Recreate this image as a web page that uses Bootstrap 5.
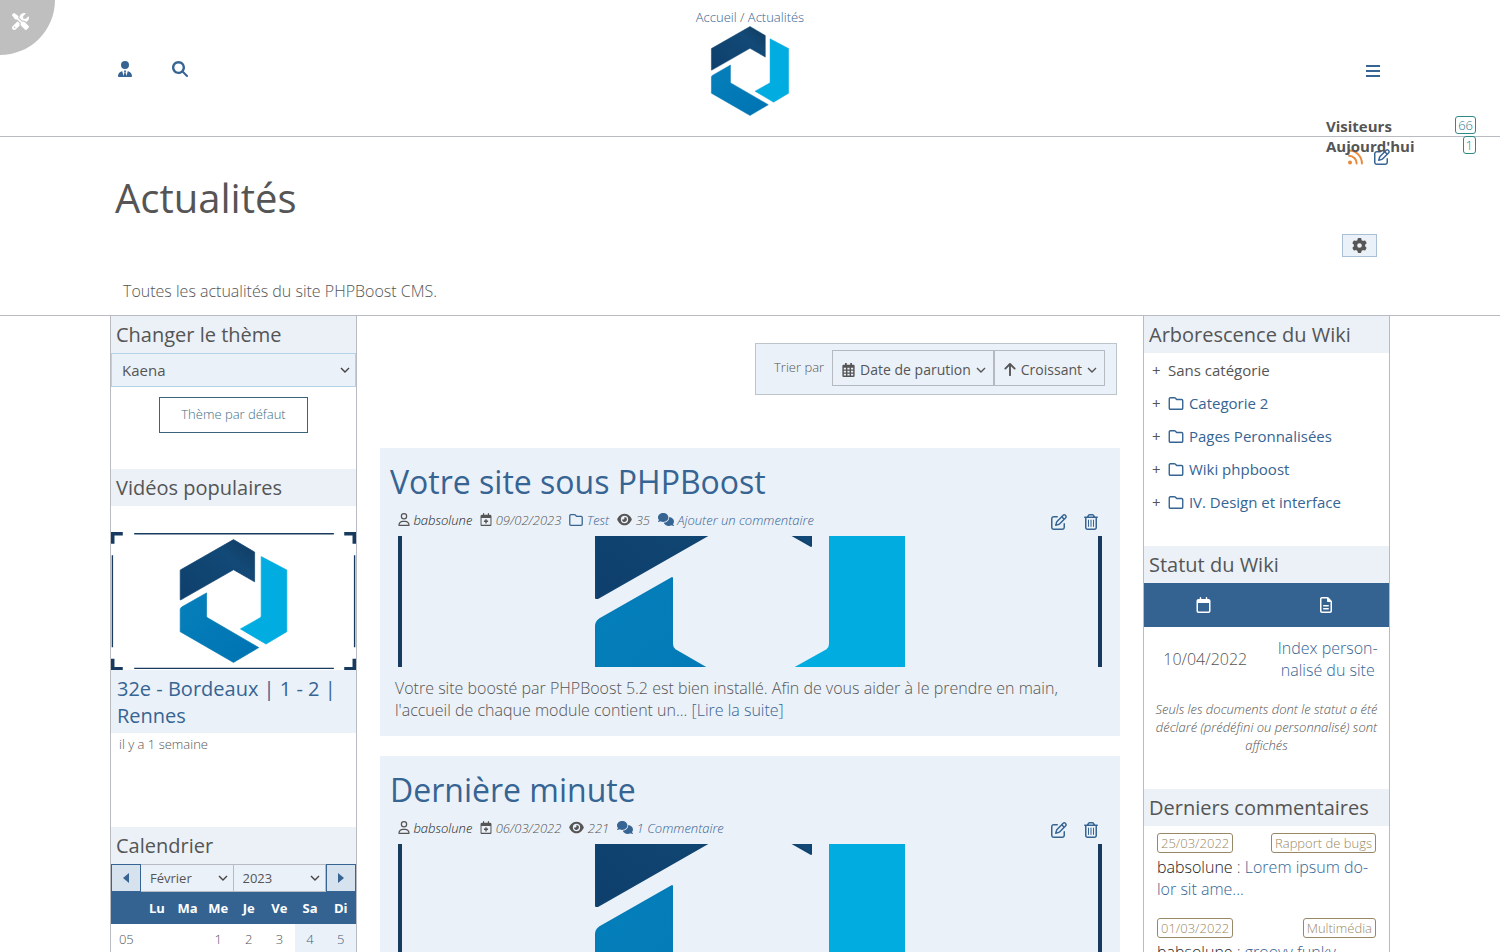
<!DOCTYPE html>
<html lang="fr">
<head>
<meta charset="utf-8">
<meta name="viewport" content="width=device-width, initial-scale=1">
<title>Actualités - PHPBoost</title>
<link href="https://cdn.jsdelivr.net/npm/bootstrap@5.3.0/dist/css/bootstrap.min.css" rel="stylesheet">
<style>
:root { --blue: #366493; --ink: #555555; --pale: #ebf1f8; --line: #b8bcc2; }
body { font-family: "Open Sans", sans-serif; font-weight: 300; font-size: 16px; line-height: 22px; color: var(--ink); background: #fff; }
a { color: var(--blue); text-decoration: none; }
.ico { fill: currentColor; display: inline-block; flex: none; }
.wrap { max-width: 1280px; }
.fs-s { font-size: 13px; }
.fs-m { font-size: 15px; font-weight: 400; }
.edge-b { border-bottom: 1px solid var(--line); }

/* header */
.top-bar { min-height: 137px; }
.crumbs { font-size: 13px; line-height: 18px; padding-top: 8px; }
.tools-corner { position: absolute; top: 0; left: 0; width: 55px; height: 55px; border: 0; padding: 0 14px 16px 0; background: #bfbfbf; color: #fff; border-radius: 0 0 55px 0; }
.top-links { position: absolute; top: 60px; left: 0; right: 0; }
.icon-btn { background: none; border: 0; padding: 0; color: var(--blue); line-height: 1; display: inline-flex; }
.icon-menu { margin: 5px 10px 0 auto; }
.visitors { position: absolute; top: 116px; right: 24px; width: 150px; z-index: 2; font-size: 15px; line-height: 20px; }
.visitors dt { font-weight: 700; }
.visitors > div { height: 20px; }
.pill { border: 1px solid #2f8a86; color: #2f7d8c; border-radius: 3px; font-size: 13px; line-height: 16px; padding: 0 2px; }
.pill-sand { border-color: #998866; color: #99885f; line-height: 18px; padding: 0 3px; }

/* page title */
.feed-links { gap: 11px; padding-top: 12px; }
.feed-rss { color: #e88a3c; }
.page-title { font-size: 40px; font-weight: 400; line-height: 50px; margin: 8px 0 0; padding-left: 5px; }
.gear-row { padding: 11px 13px 0 0; }
.gear-btn { width: 35px; height: 23px; background: var(--pale); border: 1px solid #a9bfd4; color: var(--ink); padding: 0; display: flex; align-items: center; justify-content: center; }
.intro { padding: 23px 13px 13px; }

/* side columns */
.side { flex: 0 0 247px; border: solid var(--line); border-width: 0 1px; min-width: 0; }
.side-title { font-size: 20px; font-weight: 400; line-height: 37px; background: #ebf1f6; padding: 0 5px; margin: 0; }
.side-form { margin-bottom: 36px; }
.kselect { appearance: none; border-radius: 0; color: var(--ink); border: 1px solid #b5d3e6; background: var(--pale) url("data:image/svg+xml,%3Csvg xmlns='http://www.w3.org/2000/svg' viewBox='0 0 10 6'%3E%3Cpath d='M1 1l4 4 4-4' fill='none' stroke='%23444' stroke-width='1.4'/%3E%3C/svg%3E") no-repeat right 5px center / 10px 6px; height: 34px; padding: 0 18px 0 10px; }
.btn-theme { display: block; margin: 10px auto 0; border: 1px solid #3c6478; border-radius: 0; background: #fff; color: #3c6e84; font-size: 13px; font-weight: 300; width: 149px; height: 36px; padding: 0; }
.video-item { padding: 26px 0 72px; }
.video-name { font-size: 20px; font-weight: 400; line-height: 27px; background: var(--pale); padding: 5px 6px 4px; }
.cal-nav .kselect { height: 28px; font-size: 13px; font-weight: 400; border-color: var(--line); border-width: 1px 1px 1px 0; padding-left: 9px; width: 50%; min-width: 0; }
.cal-btn { flex: 0 0 30px; border: 1px solid var(--blue); background: #d6e2ed; color: var(--blue); padding: 0; display: flex; align-items: center; justify-content: center; }
.cal { table-layout: fixed; width: 100%; text-align: center; font-size: 13px; }
.cal th { height: 32px; padding: 0; }
.cal td { height: 30px; padding: 0; }
.cal thead, .status thead { background: #346392; color: #fff; }
.cal .off { background: var(--pale); color: #41617f; }
.tree { padding: 5px 8px 23px; margin: 0; }
.tree li { line-height: 24px; padding-bottom: 9px; }
.tree .plus { width: 8px; margin-right: 8px; }
.tree .ico, .meta .ico { vertical-align: -1px; }
.tree .ico { margin-right: 1px; }
.status { table-layout: fixed; width: 100%; text-align: center; }
.status th { height: 44px; padding: 0 4px 4px 0; }
.status td { padding: 10px 8px; vertical-align: middle; }
.note { font-size: 13px; line-height: 18px; font-style: italic; padding: 9px 10px 35px; margin: 0; }
.who { color: #222; }
.who .ico { color: var(--ink); }
.comment-item { padding: 7px 13px 11px; }
.comment-item p { margin: 3px 0 0; }

/* news list */
.news-col { padding: 0 23px; min-width: 0; }
.sort-row { padding: 27px 3px 53px 0; }
.sorter { background: var(--pale); border: 1px solid #bcc4cc; padding: 6px 11px 8px 18px; }
.sort-label { font-size: 13px; padding: 6px 8px 0 0; }
.sort-btn { background: var(--pale); border: 1px solid #b4babf; color: var(--ink); font-size: 14px; line-height: 20px; height: 36px; padding: 3px 7px 0 9px; gap: 5px; }
.news { background: #ebf1f8; padding: 13px 10px 15px; margin-bottom: 20px; }
.news h2 { font-size: 32px; font-weight: 400; line-height: 42px; margin: 0; }
.meta-row { padding: 8px 12px 7px 8px; }
.meta { font-size: 13px; line-height: 18px; font-style: italic; gap: 8px; }
.acts { gap: 17px; padding-top: 3px; height: 18px; }
.cover { display: block; width: 100%; height: auto; }
.excerpt { padding: 10px 5px 0; margin: 0; }
</style>
</head>
<body>

<svg width="0" height="0" class="position-absolute" aria-hidden="true">
  <defs>
    <linearGradient id="gDark" x1="0" y1="1" x2="1" y2="0"><stop offset="0" stop-color="#0e3f6c"/><stop offset=".7" stop-color="#124976"/><stop offset="1" stop-color="#123a5f"/></linearGradient>
    <linearGradient id="gBlue" x1="0" y1="0" x2="1" y2="1"><stop offset="0" stop-color="#0580bb"/><stop offset="1" stop-color="#0073b2"/></linearGradient>
    <g id="hex" stroke-width="2" stroke-linejoin="round">
      <path fill="url(#gDark)" stroke="#114370" d="M200 110L354 22l61 36v86l-61-35L202 196h-2z"/>
      <path fill="url(#gBlue)" stroke="#057cb8" d="M200 224q0-4 4-7l72-41v66q0 4 3 6l148 86-73 43L200 288z"/>
      <path fill="#00ace0" stroke="#00ace0" d="M434 71l74 39v178l-60 36-74-44 57-32q3-2 3-6z"/>
    </g>
    <g id="framed">
      <use href="#hex"/>
      <path fill="#173a5e" d="M2 67h4v266H2zM702 67h4v266h-4zM67 3h577v4H67zM67 392h577v4H67zM0 0h34v10H10v24H0zM708 0h-34v10h24v24h10zM0 400h34v-10H10v-24H0zM708 400h-34v-10h24v-24h10z"/>
    </g>
    <symbol id="i-tools" viewBox="0 0 512 512"><path d="M78.600 5C69.100-2.400 55.600-1.500 47 7L7 47c-8.500 8.500-9.400 22-2.100 31.600l80 104c4.500 5.900 11.600 9.400 19 9.400h54.100l109 109c-14.700 29-10 65.400 14.300 89.600l112 112c12.500 12.500 32.800 12.500 45.300 0l64-64c12.500-12.500 12.500-32.800 0-45.300l-112-112c-24.200-24.200-60.600-29-89.600-14.300l-109-109V104c0-7.500-3.500-14.500-9.400-19L78.600 5zM19.900 396.100C7.200 408.800 0 426.100 0 444.100C0 481.600 30.400 512 67.900 512c18 0 35.300-7.200 48-19.900L233.700 374.300c-7.800-20.900-9-43.600-3.600-65.100l-61.700-61.700L19.900 396.100zM512 144c0-10.500-1.100-20.700-3.200-30.500c-2.400-11.200-16.100-14.100-24.200-6l-63.900 63.900c-3 3-7.100 4.700-11.300 4.700H352c-8.800 0-16-7.200-16-16V102.600c0-4.200 1.700-8.300 4.700-11.300l63.900-63.900c8.100-8.100 5.200-21.800-6-24.200C388.700 1.100 378.500 0 368 0C288.500 0 224 64.500 224 144l0 .8 85.300 85.300c36-9.100 75.800 .5 104 28.700L429 274.500c49-23 83-72.800 83-130.500zM56 432a24 24 0 1 1 48 0 24 24 0 1 1-48 0z"/></symbol>
    <symbol id="i-tie" viewBox="0 0 448 512"><path d="M96 128a128 128 0 1 0 256 0A128 128 0 1 0 96 128zm94.500 200.200l18.600 31L175.800 483.100l-36-146.900c-2-8.100-9.800-13.400-17.900-11.300C51.900 342.400 0 405.800 0 481.300c0 17 13.800 30.700 30.700 30.700H417.300c17 0 30.700-13.800 30.700-30.700c0-75.500-51.900-138.900-121.900-156.400c-8.100-2-15.900 3.300-17.900 11.300l-36 146.900L238.900 359.200l18.600-31c6.400-10.700-1.300-24.200-13.700-24.200H204.300c-12.400 0-20.100 13.600-13.700 24.200z"/></symbol>
    <symbol id="i-search" viewBox="0 0 512 512"><path d="M416 208c0 45.900-14.900 88.300-40 122.700L502.600 457.400c12.500 12.500 12.500 32.800 0 45.300s-32.800 12.500-45.300 0L330.700 376c-34.400 25.200-76.800 40-122.700 40C93.100 416 0 322.900 0 208S93.100 0 208 0S416 93.100 416 208zM208 340a132 132 0 1 0 0-264 132 132 0 1 0 0 264z"/></symbol>
    <symbol id="i-bars" viewBox="0 0 14 12"><path d="M0 0h14v2H0zM0 5h14v2H0zM0 10h14v2H0z"/></symbol>
    <symbol id="i-rss" viewBox="0 0 448 448"><circle cx="60" cy="388" r="60"/><path fill="none" stroke="currentColor" stroke-width="60" stroke-linecap="round" d="M32 190a226 226 0 0 1 226 226M32 32a384 384 0 0 1 384 384"/></symbol>
    <symbol id="i-edit" viewBox="0 0 512 512"><path d="M441 58.900L453.100 71c9.400 9.400 9.400 24.600 0 33.900L424 134.100 377.900 88 407 58.900c9.400-9.400 24.600-9.400 33.900 0zM209.800 256.200L344 121.900 390.100 168 255.800 302.200c-2.900 2.900-6.500 5-10.400 6.100l-58.500 16.700 16.700-58.500c1.100-3.900 3.200-7.500 6.100-10.400zM373.100 25L175.800 222.200c-8.700 8.700-15 19.400-18.300 31.100l-28.600 100c-2.400 8.400-.1 17.400 6.100 23.600s15.200 8.500 23.600 6.100l100-28.600c11.800-3.400 22.500-9.700 31.100-18.300L487 138.900c28.100-28.100 28.100-73.700 0-101.800L474.900 25C446.800-3.100 401.200-3.100 373.100 25zM88 64C39.400 64 0 103.400 0 152V424c0 48.600 39.400 88 88 88H360c48.600 0 88-39.400 88-88V312c0-13.300-10.700-24-24-24s-24 10.700-24 24V424c0 22.100-17.900 40-40 40H88c-22.100 0-40-17.900-40-40V152c0-22.100 17.900-40 40-40H200c13.300 0 24-10.700 24-24s-10.700-24-24-24H88z"/></symbol>
    <symbol id="i-gear" viewBox="0 0 512 512"><path d="M495.900 166.600c3.200 8.700 .5 18.400-6.400 24.600l-43.300 39.400c1.100 8.300 1.700 16.800 1.700 25.400s-.6 17.100-1.700 25.400l43.300 39.400c6.900 6.200 9.600 15.900 6.400 24.600c-4.400 11.900-9.700 23.300-15.800 34.300l-4.700 8.100c-6.600 11-14 21.400-22.100 31.200c-5.900 7.200-15.700 9.600-24.500 6.800l-55.700-17.700c-13.400 10.300-28.200 18.900-44 25.400l-12.500 57.100c-2 9.100-9 16.300-18.200 17.800c-13.800 2.300-28 3.500-42.500 3.500s-28.700-1.200-42.500-3.500c-9.200-1.500-16.200-8.700-18.200-17.800l-12.500-57.100c-15.800-6.500-30.600-15.100-44-25.400L83.100 425.900c-8.800 2.800-18.600 .3-24.500-6.800c-8.100-9.800-15.500-20.200-22.100-31.200l-4.700-8.100c-6.100-11-11.400-22.400-15.800-34.300c-3.200-8.700-.5-18.400 6.400-24.600l43.300-39.400C64.600 273.100 64 264.600 64 256s.6-17.100 1.700-25.400L22.400 191.200c-6.900-6.200-9.600-15.900-6.400-24.600c4.400-11.900 9.700-23.300 15.800-34.300l4.700-8.100c6.600-11 14-21.400 22.100-31.200c5.900-7.200 15.700-9.600 24.500-6.800l55.700 17.700c13.400-10.300 28.200-18.900 44-25.400l12.500-57.100c2-9.100 9-16.300 18.200-17.800C227.300 1.200 241.500 0 256 0s28.700 1.200 42.500 3.500c9.200 1.500 16.200 8.700 18.200 17.800l12.500 57.100c15.800 6.500 30.600 15.100 44 25.400l55.700-17.700c8.800-2.800 18.600-.3 24.500 6.800c8.100 9.800 15.500 20.200 22.100 31.200l4.700 8.100c6.100 11 11.400 22.400 15.800 34.300zM256 336a80 80 0 1 0 0-160 80 80 0 1 0 0 160z"/></symbol>
    <symbol id="i-user" viewBox="0 0 448 512"><path d="M304 128a80 80 0 1 0-160 0 80 80 0 1 0 160 0zM96 128a128 128 0 1 1 256 0A128 128 0 1 1 96 128zM49.300 464H398.700c-8.900-63.300-63.300-112-129-112H178.300c-65.700 0-120.100 48.700-129 112zM0 482.300C0 383.800 79.800 304 178.300 304h91.400C368.200 304 448 383.800 448 482.300c0 16.400-13.300 29.700-29.700 29.700H29.700C13.300 512 0 498.700 0 482.300z"/></symbol>
    <symbol id="i-cal" viewBox="0 0 448 512"><path d="M152 24c0-13.300-10.700-24-24-24s-24 10.700-24 24V64H64C28.700 64 0 92.700 0 128V448c0 35.300 28.700 64 64 64H384c35.300 0 64-28.700 64-64V128c0-35.300-28.700-64-64-64H344V24c0-13.300-10.700-24-24-24s-24 10.700-24 24V64H152V24zM48 192H400V448c0 8.800-7.200 16-16 16H64c-8.800 0-16-7.200-16-16V192z"/></symbol>
    <symbol id="i-calplus" viewBox="0 0 448 512"><use href="#i-cal" width="448" height="512"/><path d="M196 246h56v54h54v56h-54v54h-56v-54h-54v-56h54z"/></symbol>
    <symbol id="i-days" viewBox="0 0 448 512"><path fill-rule="evenodd" d="M96 0h64v64h128V0h64v64h56q40 0 40 44v360q0 44-44 44H44q-44 0-44-44V108q0-44 40-44h56zM52 176h80v64H52zM184 176h80v64h-80zM316 176h80v64h-80zM52 280h80v70H52zM184 280h80v70h-80zM316 280h80v70h-80zM52 390h80v64H52zM184 390h80v64h-80zM316 390h80v64h-80z"/></symbol>
    <symbol id="i-folder" viewBox="0 32 512 448"><path d="M0 96C0 60.700 28.700 32 64 32H196.100c19.100 0 37.400 7.600 50.900 21.100L289.900 96H448c35.300 0 64 28.700 64 64V416c0 35.300-28.700 64-64 64H64c-35.300 0-64-28.700-64-64V96zM64 80c-8.800 0-16 7.200-16 16V416c0 8.800 7.200 16 16 16H448c8.800 0 16-7.200 16-16V160c0-8.800-7.200-16-16-16H286.600c-10.600 0-20.800-4.200-28.300-11.700L213.100 87c-4.500-4.500-10.600-7-17-7H64z"/></symbol>
    <symbol id="i-eye" viewBox="0 0 576 512"><path d="M288 32c-80.800 0-145.500 36.800-192.600 80.600C48.600 156 17.300 208 2.500 243.700c-3.300 7.900-3.300 16.700 0 24.600C17.300 304 48.600 356 95.400 399.400C142.500 443.200 207.200 480 288 480s145.500-36.800 192.600-80.600c46.800-43.500 78.100-95.400 93-131.100c3.300-7.900 3.300-16.700 0-24.600c-14.900-35.700-46.200-87.700-93-131.100C433.500 68.800 368.800 32 288 32zM144 256a144 144 0 1 1 288 0 144 144 0 1 1-288 0zm144-64c0 35.300-28.700 64-64 64c-7.100 0-13.900-1.200-20.300-3.300c-5.500-1.800-11.900 1.600-11.700 7.400c.3 6.900 1.300 13.800 3.200 20.700c13.700 51.200 66.400 81.600 117.600 67.900s81.600-66.400 67.900-117.600c-11.100-41.500-47.800-69.400-88.600-71.100c-5.800-.2-9.200 6.100-7.400 11.700c2.100 6.400 3.300 13.200 3.300 20.300z"/></symbol>
    <symbol id="i-chat" viewBox="0 0 640 512"><path d="M208 352c114.900 0 208-78.800 208-176S322.900 0 208 0S0 78.800 0 176c0 38.600 14.700 74.300 39.600 103.400c-3.500 9.400-8.700 17.700-14.200 24.700c-4.800 6.200-9.700 11-13.300 14.300c-1.800 1.600-3.300 2.900-4.300 3.700l-1.300 1C1 327.200-1.400 334.400 .8 340.900S9.100 352 16 352c21.800 0 43.800-5.600 62.100-12.500c9.200-3.500 17.800-7.400 25.300-11.400C134.100 343.300 169.800 352 208 352zM448 176c0 112.300-99.100 196.900-216.500 207C255.800 457.400 336.400 512 432 512c38.200 0 73.900-8.700 104.700-23.900c7.500 4 16 7.900 25.200 11.400c18.300 6.900 40.300 12.500 62.100 12.500c6.900 0 13.100-4.500 15.200-11.100c2.100-6.600-.2-13.800-5.800-17.900c-1.600-1-3.500-2.600-5.600-4.700c-3.600-3.300-8.500-8.100-13.300-14.300c-5.500-7-10.700-15.400-14.200-24.700c24.900-29 39.600-64.700 39.600-103.400c0-92.800-84.900-168.900-192.600-175.500c.4 5.100 .9 10.500 .9 15.600z"/></symbol>
    <symbol id="i-trash" viewBox="0 0 448 512"><path d="M170.500 51.600L151.500 80h145l-19-28.400c-1.500-2.200-4-3.600-6.700-3.600H177.100c-2.700 0-5.200 1.300-6.700 3.600zm147-26.600L354.200 80H424c13.300 0 24 10.700 24 24s-10.700 24-24 24h-8V432c0 44.200-35.800 80-80 80H112c-44.200 0-80-35.800-80-80V128H24c-13.300 0-24-10.700-24-24S10.700 80 24 80H93.800l36.700-55.100C140.900 9.400 158.400 0 177.100 0h93.700c18.700 0 36.200 9.400 46.600 24.900zM80 128V432c0 17.700 14.300 32 32 32H336c17.700 0 32-14.300 32-32V128H80zm80 64V400c0 8.800-7.200 16-16 16s-16-7.200-16-16V192c0-8.800 7.200-16 16-16s16 7.200 16 16zm80 0V400c0 8.800-7.200 16-16 16s-16-7.200-16-16V192c0-8.800 7.200-16 16-16s16 7.200 16 16zm80 0V400c0 8.800-7.200 16-16 16s-16-7.200-16-16V192c0-8.800 7.200-16 16-16s16 7.200 16 16z"/></symbol>
    <symbol id="i-file" viewBox="0 0 384 512"><path d="M64 464c-8.800 0-16-7.200-16-16V64c0-8.800 7.200-16 16-16H224v80c0 17.700 14.300 32 32 32h80V448c0 8.800-7.200 16-16 16H64zM64 0C28.700 0 0 28.700 0 64V448c0 35.300 28.700 64 64 64H320c35.300 0 64-28.700 64-64V154.500c0-17-6.700-33.300-18.700-45.300L274.700 18.700C262.700 6.700 246.500 0 229.500 0H64zm56 256c-13.300 0-24 10.700-24 24s10.700 24 24 24H264c13.300 0 24-10.700 24-24s-10.700-24-24-24H120zm0 96c-13.300 0-24 10.700-24 24s10.700 24 24 24H264c13.300 0 24-10.700 24-24s-10.700-24-24-24H120z"/></symbol>
    <symbol id="i-up" viewBox="0 0 384 512"><path d="M214.600 41.400c-12.500-12.500-32.800-12.500-45.300 0l-160 160c-12.500 12.500-12.500 32.800 0 45.300s32.800 12.500 45.300 0L160 141.200V448c0 17.700 14.300 32 32 32s32-14.300 32-32V141.200L329.400 246.600c12.500 12.500 32.800 12.500 45.300 0s12.500-32.800 0-45.300l-160-160z"/></symbol>
    <symbol id="i-down" viewBox="0 0 10 6"><path fill="none" stroke="currentColor" stroke-width="1.400" d="M1 1l4 4 4-4"/></symbol>
  </defs>
</svg>

<header class="top-bar position-relative edge-b">
  <button class="tools-corner" aria-label="Outils"><svg class="ico" width="17" height="17"><use href="#i-tools"/></svg></button>
  <div class="text-center">
    <nav class="crumbs" aria-label="Fil d'Ariane"><a href="#">Accueil</a> / <a href="#">Actualités</a></nav>
    <a href="#" aria-label="PHPBoost" class="d-inline-block"><svg class="d-block" width="80" height="90" viewBox="195 20 318 359"><use href="#hex"/></svg></a>
  </div>
  <div class="top-links">
    <div class="wrap mx-auto d-flex align-items-start">
      <button class="icon-btn ms-2" aria-label="Connexion"><svg class="ico" width="14" height="18"><use href="#i-tie"/></svg></button>
      <button class="icon-btn ms-4 px-3" aria-label="Rechercher"><svg class="ico" width="16" height="18"><use href="#i-search"/></svg></button>
      <button class="icon-btn icon-menu" aria-label="Menu"><svg class="ico" width="14" height="12"><use href="#i-bars"/></svg></button>
    </div>
  </div>
  <dl class="visitors m-0">
    <div class="d-flex justify-content-between align-items-start"><dt>Visiteurs</dt><dd class="pill m-0">66</dd></div>
    <div class="d-flex justify-content-between align-items-start"><dt>Aujourd'hui</dt><dd class="pill m-0">1</dd></div>
  </dl>
</header>

<section class="edge-b">
  <div class="wrap mx-auto">
    <div class="feed-links d-flex justify-content-end">
      <a href="#" aria-label="Flux RSS" class="feed-rss"><svg class="ico d-block" width="15" height="16"><use href="#i-rss"/></svg></a>
      <a href="#" aria-label="Modifier"><svg class="ico d-block" width="16" height="16"><use href="#i-edit"/></svg></a>
    </div>
    <h1 class="page-title">Actualités</h1>
    <div class="gear-row d-flex justify-content-end"><button class="gear-btn" aria-label="Options"><svg class="ico" width="15" height="15"><use href="#i-gear"/></svg></button></div>
    <p class="intro mb-0">Toutes les actualités du site PHPBoost CMS.</p>
  </div>
</section>

<div class="wrap mx-auto d-flex">
  <aside class="side">
    <h2 class="side-title">Changer le thème</h2>
    <form class="side-form">
      <select class="kselect w-100 d-block fs-m" aria-label="Thème"><option>Kaena</option></select>
      <button type="button" class="btn btn-theme">Thème par défaut</button>
    </form>
    <h2 class="side-title">Vidéos populaires</h2>
    <div class="video-item">
      <svg class="cover" viewBox="0 0 708 400"><use href="#framed"/></svg>
      <div class="video-name"><a href="#">32e - Bordeaux | 1 - 2 | Rennes</a></div>
      <div class="fs-s px-2">il y a 1 semaine</div>
    </div>
    <h2 class="side-title">Calendrier</h2>
    <div class="cal-nav d-flex">
      <button class="cal-btn" aria-label="Mois précédent"><svg class="ico" width="6" height="10" viewBox="0 0 6 10"><path d="M6 0v10L0 5z"/></svg></button>
      <select class="kselect" aria-label="Mois"><option>Février</option></select>
      <select class="kselect" aria-label="Année"><option>2023</option></select>
      <button class="cal-btn" aria-label="Mois suivant"><svg class="ico" width="6" height="10" viewBox="0 0 6 10"><path d="M0 0v10l6-5z"/></svg></button>
    </div>
    <table class="cal">
      <thead><tr><th></th><th>Lu</th><th>Ma</th><th>Me</th><th>Je</th><th>Ve</th><th>Sa</th><th>Di</th></tr></thead>
      <tbody>
        <tr><td>05</td><td></td><td></td><td>1</td><td>2</td><td>3</td><td class="off">4</td><td class="off">5</td></tr>
      </tbody>
    </table>
  </aside>

  <main class="news-col flex-grow-1">
    <div class="d-flex justify-content-end sort-row">
      <div class="sorter d-flex">
        <span class="sort-label">Trier par</span>
        <button class="sort-btn d-flex align-items-center"><svg class="ico" width="13" height="14"><use href="#i-days"/></svg>Date de parution<svg class="ico" width="10" height="6"><use href="#i-down"/></svg></button>
        <button class="sort-btn d-flex align-items-center"><svg class="ico" width="12" height="15"><use href="#i-up"/></svg>Croissant<svg class="ico" width="10" height="6"><use href="#i-down"/></svg></button>
      </div>
    </div>

    <article class="news">
      <h2><a href="#">Votre site sous PHPBoost</a></h2>
      <div class="meta-row d-flex justify-content-between">
        <div class="meta d-flex">
          <span class="who"><svg class="ico" width="12" height="13"><use href="#i-user"/></svg> babsolune</span>
          <span><svg class="ico" width="12" height="13"><use href="#i-calplus"/></svg> 09/02/2023</span>
          <a href="#"><svg class="ico" width="14" height="12"><use href="#i-folder"/></svg> Test</a>
          <span><svg class="ico" width="15" height="13"><use href="#i-eye"/></svg> 35</span>
          <a href="#"><svg class="ico" width="16" height="13"><use href="#i-chat"/></svg> Ajouter un commentaire</a>
        </div>
        <div class="acts d-flex"><a href="#" aria-label="Modifier"><svg class="ico d-block" width="16" height="16"><use href="#i-edit"/></svg></a><a href="#" aria-label="Supprimer"><svg class="ico d-block" width="14" height="16"><use href="#i-trash"/></svg></a></div>
      </div>
      <div class="px-2"><svg class="cover" viewBox="2 134 704 131"><use href="#framed"/></svg></div>
      <p class="excerpt">Votre site boosté par PHPBoost 5.2 est bien installé. Afin de vous aider à le prendre en main, l'accueil de chaque module contient un... <a href="#">[Lire la suite]</a></p>
    </article>

    <article class="news">
      <h2><a href="#">Dernière minute</a></h2>
      <div class="meta-row d-flex justify-content-between">
        <div class="meta d-flex">
          <span class="who"><svg class="ico" width="12" height="13"><use href="#i-user"/></svg> babsolune</span>
          <span><svg class="ico" width="12" height="13"><use href="#i-calplus"/></svg> 06/03/2022</span>
          <span><svg class="ico" width="15" height="13"><use href="#i-eye"/></svg> 221</span>
          <a href="#"><svg class="ico" width="16" height="13"><use href="#i-chat"/></svg> 1 Commentaire</a>
        </div>
        <div class="acts d-flex"><a href="#" aria-label="Modifier"><svg class="ico d-block" width="16" height="16"><use href="#i-edit"/></svg></a><a href="#" aria-label="Supprimer"><svg class="ico d-block" width="14" height="16"><use href="#i-trash"/></svg></a></div>
      </div>
      <div class="px-2"><svg class="cover" viewBox="2 134 704 131"><use href="#framed"/></svg></div>
    </article>
  </main>

  <aside class="side">
    <h2 class="side-title">Arborescence du Wiki</h2>
    <ul class="tree list-unstyled fs-m">
      <li class="d-flex align-items-center"><span class="plus">+</span>Sans catégorie</li>
      <li class="d-flex align-items-center"><span class="plus">+</span><a href="#"><svg class="ico" width="16" height="13"><use href="#i-folder"/></svg> Categorie 2</a></li>
      <li class="d-flex align-items-center"><span class="plus">+</span><a href="#"><svg class="ico" width="16" height="13"><use href="#i-folder"/></svg> Pages Peronnalisées</a></li>
      <li class="d-flex align-items-center"><span class="plus">+</span><a href="#"><svg class="ico" width="16" height="13"><use href="#i-folder"/></svg> Wiki phpboost</a></li>
      <li class="d-flex align-items-center"><span class="plus">+</span><a href="#"><svg class="ico" width="16" height="13"><use href="#i-folder"/></svg> IV. Design et interface</a></li>
    </ul>
    <h2 class="side-title">Statut du Wiki</h2>
    <table class="status">
      <thead><tr><th><svg class="ico" width="15" height="16"><use href="#i-cal"/></svg></th><th><svg class="ico" width="12" height="16"><use href="#i-file"/></svg></th></tr></thead>
      <tbody><tr><td>10/04/2022</td><td><a href="#">Index person&shy;nalisé du site</a></td></tr></tbody>
    </table>
    <p class="note text-center">Seuls les documents dont le statut a été déclaré (prédéfini ou personnalisé) sont affichés</p>
    <h2 class="side-title">Derniers commentaires</h2>
    <div class="comment-item">
      <div class="d-flex justify-content-between"><span class="pill pill-sand">25/03/2022</span><a href="#" class="pill pill-sand">Rapport de bugs</a></div>
      <p><span class="who">babsolune</span> : <a href="#">Lorem ipsum do&shy;lor sit ame...</a></p>
    </div>
    <div class="comment-item">
      <div class="d-flex justify-content-between"><span class="pill pill-sand">01/03/2022</span><a href="#" class="pill pill-sand">Multimédia</a></div>
      <p><span class="who">babsolune</span> : <a href="#">groovy funky</a></p>
    </div>
  </aside>
</div>

<script src="https://cdn.jsdelivr.net/npm/bootstrap@5.3.0/dist/js/bootstrap.bundle.min.js"></script>
</body>
</html>
